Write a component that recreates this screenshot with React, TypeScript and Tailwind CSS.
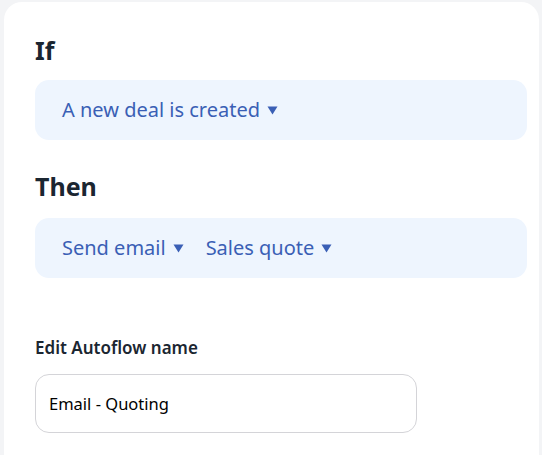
import React from "react";

const Caret: React.FC = () => (
  <svg width="11" height="9" viewBox="0 0 11 9" className="ml-[7px] shrink-0">
    <path d="M0.5 0.5 H10.5 L5.5 8.5 Z" fill="#3a5fb5" />
  </svg>
);

const Picker: React.FC<{ label: string }> = ({ label }) => (
  <button className="flex items-center text-[20px] text-[#3a5fb5] leading-7">
    {label}
    <Caret />
  </button>
);

const App: React.FC = () => {
  return (
    <div
      className="w-[542px] h-[455px] overflow-hidden bg-[#f3f4f6] pt-[2px] pl-[4px]"
      style={{ fontFamily: '"Noto Sans", "Open Sans", sans-serif' }}
    >
      <div className="w-[535px] h-[470px] bg-white rounded-t-[18px] pl-[31px] pr-[12px] pt-[32px]">
        <h2 className="text-[25px] font-bold leading-8 text-[#1b2631]">If</h2>
        <div className="mt-[14px] h-[60px] rounded-[14px] bg-[#eef5fe] flex items-center pl-[27px]">
          <Picker label="A new deal is created" />
        </div>

        <h2 className="mt-[30px] text-[25px] font-bold leading-8 text-[#1b2631]">Then</h2>
        <div className="mt-[16px] h-[60px] rounded-[14px] bg-[#eef5fe] flex items-center pl-[27px] gap-[22px]">
          <Picker label="Send email" />
          <Picker label="Sales quote" />
        </div>

        <label className="block mt-[58px] text-[17px] font-semibold leading-6 text-[#1b2631]">
          Edit Autoflow name
        </label>
        <input
          className="mt-[14px] w-[382px] h-[59px] rounded-[14px] border border-[#d4d4d8] pl-[13px] text-[16.5px] text-black outline-none"
          defaultValue="Email - Quoting"
        />
      </div>
    </div>
  );
};

export default App;
